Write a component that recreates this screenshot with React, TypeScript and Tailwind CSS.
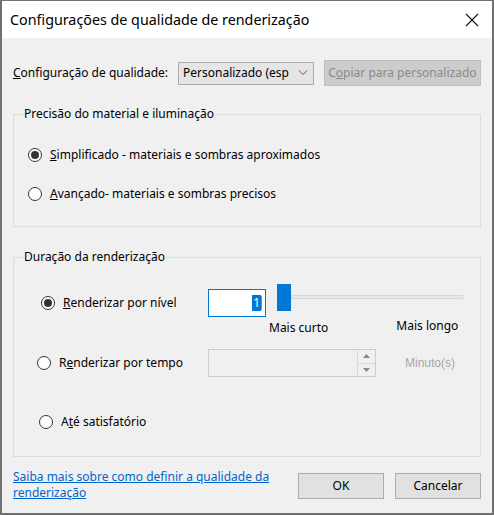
import React from "react";

function Radio({ checked }: { checked?: boolean }) {
  return (
    <span className="flex h-[14px] w-[14px] shrink-0 items-center justify-center rounded-full border border-[#333333] bg-white">
      {checked && <span className="h-[8px] w-[8px] rounded-full bg-[#333333]" />}
    </span>
  );
}

export default function App() {
  return (
    <div className="flex h-[515px] w-[494px] flex-col border border-[#707070] border-b-2 border-x-2 bg-[#f0f0f0] font-['Noto_Sans'] text-[12px] leading-[16px] text-black">
      {/* Title bar */}
      <div className="flex h-[37px] shrink-0 items-center justify-between bg-white pl-[8px] pr-[13px]">
        <span className="text-[14.3px] leading-[20px] text-black">Configurações de qualidade de renderização</span>
        <svg width="14" height="14" viewBox="0 0 14 14" className="mt-[1px]">
          <path d="M1 1 L13 13 M13 1 L1 13" stroke="#111" strokeWidth="1.1" fill="none" />
        </svg>
      </div>

      <div className="flex flex-1 flex-col px-[11px]">
        {/* Quality row */}
        <div className="mt-[22px] flex h-[26px] items-center">
          <span className="w-[165px] shrink-0">
            <span className="underline">C</span>onfiguração de qualidade:
          </span>
          <div className="flex h-[23px] w-[138px] items-center justify-between overflow-hidden border border-[#adadad] bg-[#e5e5e5] pl-[4px] pr-[5px]">
            <span className="w-[108px] overflow-hidden whitespace-nowrap">Personalizado (esp</span>
            <svg width="10" height="6" viewBox="0 0 10 6">
              <path d="M1 0.5 L5 4.5 L9 0.5" stroke="#555" strokeWidth="1" fill="none" />
            </svg>
          </div>
          <div className="ml-[10px] flex h-[26px] w-[160px] items-center justify-center border border-[#bfbfbf] bg-[#cccccc] text-[#8a8a8a]">
            <span className="whitespace-nowrap">
              C<span className="underline">o</span>piar para personalizado
            </span>
          </div>
        </div>

        {/* Group 1 */}
        <fieldset className="mt-[20px] h-[121px] w-[468px] border border-[#dcdcdc] px-[8px]">
          <legend className="ml-[1px] px-[1px] leading-[16px]">Precisão do material e iluminação</legend>
          <div className="mt-[23px] flex flex-col gap-[19px] pl-[6px]">
            <div className="flex h-[20px] items-center gap-[8px]">
              <Radio checked />
              <span>
                <span className="underline">S</span>implificado - materiais e sombras aproximados
              </span>
            </div>
            <div className="flex h-[20px] items-center gap-[8px]">
              <Radio />
              <span>
                <span className="underline">A</span>vançado- materiais e sombras precisos
              </span>
            </div>
          </div>
        </fieldset>

        {/* Group 2 */}
        <fieldset className="mt-[22px] h-[208px] w-[468px] border border-[#dcdcdc] px-[8px]">
          <legend className="ml-[1px] px-[1px] leading-[16px]">Duração da renderização</legend>
          <div className="flex flex-col">
            {/* Row level */}
            <div className="mt-[22px] flex h-[32px] items-center">
              <div className="ml-[19px] flex w-[167px] items-center gap-[8px]">
                <Radio checked />
                <span>
                  <span className="underline">R</span>enderizar por nível
                </span>
              </div>
              <div className="flex h-[28px] w-[58px] items-center justify-end border border-[#0078d7] bg-white pr-[3px]">
                <span className="bg-[#0078d7] px-[1px] text-white">1</span>
                <span className="h-[14px] w-[1px] bg-[#e07a00]" />
              </div>
              <div className="-mt-[11px] ml-[11px] flex items-start">
                <div className="h-[27px] w-[14px] bg-[#0078d7]" />
                <div className="mt-[11px] h-[4px] w-[172px] border border-[#d6d6d6] bg-[#e7eaea]" />
              </div>
            </div>
            <div className="mt-[1px] flex h-[16px] items-center">
              <span className="ml-[247px]">Mais curto</span>
              <span className="-mt-[4px] ml-[68px]">Mais longo</span>
            </div>
            {/* Row time */}
            <div className="mt-[13px] flex h-[28px] items-center">
              <div className="ml-[15px] flex w-[171px] items-center gap-[8px]">
                <Radio />
                <span>
                  R<span className="underline">e</span>nderizar por tempo
                </span>
              </div>
              <div className="flex h-[28px] w-[168px] border border-[#cccccc] bg-[#f0f0f0]">
                <div className="flex-1" />
                <div className="flex w-[18px] flex-col border-l border-[#dadada]">
                  <div className="flex flex-1 items-center justify-center border-b border-[#dadada]">
                    <svg width="7" height="4" viewBox="0 0 7 4"><path d="M0 4 L3.5 0 L7 4 Z" fill="#8a8a8a" /></svg>
                  </div>
                  <div className="flex flex-1 items-center justify-center">
                    <svg width="7" height="4" viewBox="0 0 7 4"><path d="M0 0 L3.5 4 L7 0 Z" fill="#8a8a8a" /></svg>
                  </div>
                </div>
              </div>
              <span className="ml-[29px] font-['Liberation_Sans'] text-[12px] text-[#a6a6a6]">Minuto(s)</span>
            </div>
            {/* Row satisfactory */}
            <div className="mt-[35px] flex h-[20px] items-center">
              <div className="ml-[17px] flex items-center gap-[8px]">
                <Radio />
                <span>
                  A<span className="underline">t</span>é satisfatório
                </span>
              </div>
            </div>
          </div>
        </fieldset>

        {/* Footer */}
        <div className="mt-[12px] flex items-start">
          <a className="w-[275px] text-[#0066cc] underline">
            Saiba mais sobre como definir a qualidade da renderização
          </a>
          <div className="ml-[10px] mt-[4px] flex gap-[11px]">
            <div className="flex h-[26px] w-[86px] items-center justify-center border border-[#adadad] bg-[#e1e1e1]">OK</div>
            <div className="flex h-[26px] w-[86px] items-center justify-center border border-[#adadad] bg-[#e1e1e1]">Cancelar</div>
          </div>
        </div>
      </div>
    </div>
  );
}
